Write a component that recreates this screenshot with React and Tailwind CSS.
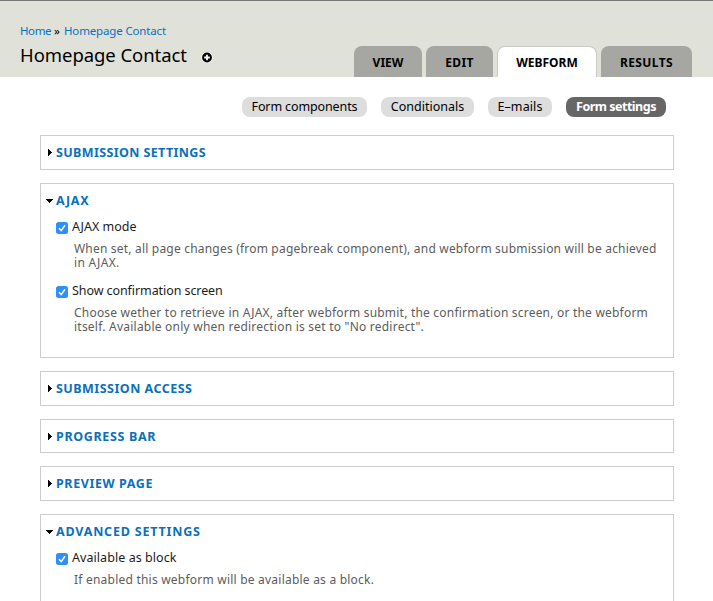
const tabs = [
  { label: 'VIEW', cls: 'w-[68px] bg-[#a6a7a2]', text: 'tracking-[0px]' },
  { label: 'EDIT', cls: 'w-[67px] bg-[#a6a7a2]', text: 'tracking-[0.4px]' },
  { label: 'WEBFORM', cls: 'w-[100px] border border-b-0 border-[#c9cac4] bg-white', text: 'tracking-[0px]' },
  { label: 'RESULTS', cls: 'w-[91px] bg-[#a6a7a2]', text: 'tracking-[0.4px]' },
];

const pills = [
  { label: 'Form components', cls: 'w-[125px] bg-[#dddddd] text-black', text: 'tracking-[-0.12px]' },
  { label: 'Conditionals', cls: 'w-[93px] bg-[#dddddd] text-black', text: 'tracking-[0px]' },
  { label: 'E–mails', cls: 'w-[64px] bg-[#dddddd] text-black', text: 'tracking-[0.1px]' },
  { label: 'Form settings', cls: 'w-[100px] bg-[#666666] text-white font-bold', text: 'tracking-[-0.5px]' },
];

function Fieldset({ title, open, size, text, children }) {
  return (
    <section className={`border border-[#cccccc] pl-[6px] ${size}`}>
      <h2 className="flex h-[33px] items-center">
        <svg width="9" height="9" viewBox="0 0 9 9" className="shrink-0 overflow-visible" shapeRendering="crispEdges">
          <path d={open ? 'M-2 3H6L2 7Z' : 'M1 1L5 4.500L1 8Z'} />
        </svg>
        <span className={`whitespace-nowrap pt-[2px] text-[12.5px] font-bold text-[#0a70bd] ${text}`}>{title}</span>
      </h2>
      {children}
    </section>
  );
}

function Check({ label, text }) {
  return (
    <label className="flex h-[20px] items-center pl-[9px]">
      <svg width="12" height="12" viewBox="0 0 12 12" className="mt-[2px] shrink-0">
        <rect width="12" height="12" rx="2.500" fill="#2f8ff7" />
        <path d="M3 6.300L5.200 8.600L9 3.300" fill="none" stroke="#fff" strokeWidth="1.500" />
      </svg>
      <span className={`ml-[4px] whitespace-nowrap text-[12.5px] text-[#1c1c1c] ${text}`}>{label}</span>
    </label>
  );
}

function Line({ text, children }) {
  return <span className={`block h-[14px] whitespace-nowrap ${text}`}>{children}</span>;
}

export default function App() {
  return (
    <div className="h-[601px] w-[713px] overflow-hidden bg-white font-['Noto_Sans',sans-serif] text-black">
      <header className="flex h-[77px] justify-between border-t border-[#777777] bg-[#e0e1d9] pl-[20px] pr-[21px]">
        <div className="pt-[22px]">
          <nav className="flex h-[16px] items-center gap-[4px] whitespace-nowrap text-[11.5px] text-[#0a70bd]">
            <a className="w-[30px] tracking-[-0.4px]">Home</a>
            <span className="w-[6px] text-black">»</span>
            <a className="tracking-[-0.15px]">Homepage Contact</a>
          </nav>
          <div className="flex h-[34px] items-center">
            <h1 className="w-[182px] whitespace-nowrap pb-[2px] text-[18.5px] tracking-[-0.06px]">Homepage Contact</h1>
            <svg width="11" height="11" viewBox="0 0 11 11" className="mt-[3px] overflow-visible">
              <circle cx="5" cy="5.500" r="5.500" fill="#fff" />
              <circle cx="5" cy="5.500" r="4.900" />
              <path d="M5 2.700V8.300M2.200 5.500H7.800" stroke="#fff" strokeWidth="1.800" />
            </svg>
          </div>
        </div>
        <nav className="flex items-end gap-[4px]">
          {tabs.map((t) => (
            <a key={t.label} className={`flex h-[31px] items-center justify-center rounded-t-[8px] pt-[2px] text-[12px] font-bold ${t.cls}`}>
              <span className={t.text}>{t.label}</span>
            </a>
          ))}
        </nav>
      </header>
      <nav className="mt-[20px] flex justify-end gap-[14px] pr-[47px]">
        {pills.map((p) => (
          <a key={p.label} className={`flex h-[20px] items-center justify-center whitespace-nowrap rounded-[8px] text-[12.5px] ${p.cls}`}>
            <span className={p.text}>{p.label}</span>
          </a>
        ))}
      </nav>
      <main className="ml-[40px] mt-[18px] w-[634px]">
        <Fieldset title="SUBMISSION SETTINGS" size="mb-[13px] h-[35px]" text="tracking-[0.38px]" />
        <Fieldset title="AJAX" open size="mb-[13px] h-[175px]" text="tracking-[0.7px]">
          <Check label="AJAX mode" text="tracking-[0px]" />
          <p className="pl-[27px] pt-[5px] text-[12px] leading-[14px] text-[#5c5c5c]">
            <Line text="tracking-[0.197px]">When set, all page changes (from pagebreak component), and webform submission will be achieved</Line>
            <Line text="tracking-[0.3px]">in AJAX.</Line>
          </p>
          <div className="h-[11px]" />
          <Check label="Show confirmation screen" text="tracking-[-0.08px]" />
          <p className="pl-[27px] pt-[5px] text-[12px] leading-[14px] text-[#5c5c5c]">
            <Line text="tracking-[0.207px]">Choose wether to retrieve in AJAX, after webform submit, the confirmation screen, or the webform</Line>
            <Line text="tracking-[0.225px]">itself. Available only when redirection is set to "No redirect".</Line>
          </p>
        </Fieldset>
        <Fieldset title="SUBMISSION ACCESS" size="mb-[13px] h-[35px]" text="tracking-[0.48px]" />
        <Fieldset title="PROGRESS BAR" size="mb-[13px] h-[34px]" text="tracking-[0.65px]" />
        <Fieldset title="PREVIEW PAGE" size="mb-[13px] h-[35px]" text="tracking-[0.6px]" />
        <Fieldset title="ADVANCED SETTINGS" open size="h-[120px]" text="tracking-[0.8px]">
          <Check label="Available as block" text="tracking-[0.06px]" />
          <p className="pl-[27px] pt-[5px] text-[12px] leading-[14px] text-[#5c5c5c]">
            <Line text="tracking-[0.22px]">If enabled this webform will be available as a block.</Line>
          </p>
        </Fieldset>
      </main>
    </div>
  );
}
